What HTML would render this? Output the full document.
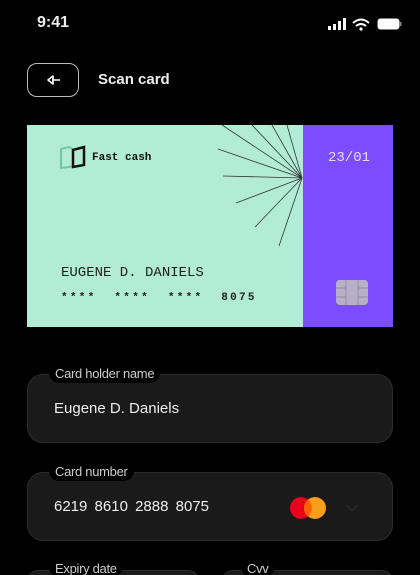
<!DOCTYPE html>
<html style="height:575px;overflow:hidden"><head><style>
body{margin:0;width:420px;height:575px;background:#000;overflow:hidden;font-family:"Liberation Sans",sans-serif;color:#fff;position:relative}
.abs{position:absolute}
.field{position:absolute;left:27px;width:364px;height:67px;background:#1a1a1a;border:1px solid #2c2c2c;border-radius:16px}
.lbl{position:absolute;background:#000;color:#ccc;font-size:13px;padding:0 6px 2px;border-radius:0 0 10px 10px;letter-spacing:-0.3px}
.val{position:absolute;left:26px;font-size:15px;color:#eee}
.mono{font-family:"Liberation Mono",monospace}
</style></head><body>
<div class="abs" style="left:37px;top:14px;font-size:16px;font-weight:bold;color:#eee">9:41</div>
<svg class="abs" style="left:327px;top:17px" width="76" height="16">
<rect x="1" y="9" width="3" height="4" fill="#fff"/><rect x="6" y="7" width="3" height="6" fill="#fff"/><rect x="11" y="4" width="3" height="9" fill="#fff"/><rect x="16" y="1" width="3" height="12" fill="#fff"/>
<path d="M26 6 Q34 -1 42 6" stroke="#fff" stroke-width="2" fill="none"/><path d="M29 9 Q34 5 39 9" stroke="#fff" stroke-width="2" fill="none"/><circle cx="34" cy="12" r="1.6" fill="#fff"/>
<rect x="51" y="2" width="21" height="10" rx="2.5" fill="#fff" stroke="#fff"/><rect x="73" y="5" width="1.5" height="4" fill="#888"/>
</svg>
<div class="abs" style="left:27px;top:63px;width:52px;height:34px;border:1px solid #bbb;border-radius:10px;box-sizing:border-box"></div>
<svg class="abs" style="left:44px;top:72px" width="18" height="16"><path d="M16 8H8M9 4L4 8L9 12Z" stroke="#fff" stroke-width="1.6" fill="none" stroke-linejoin="round"/></svg>
<div class="abs" style="left:98px;top:71px;font-size:15px;font-weight:bold;color:#eee">Scan card</div>

<div class="abs" style="left:27px;top:125px;width:276px;height:202px;background:#b2ecd5"></div>
<div class="abs" style="left:303px;top:125px;width:90px;height:202px;background:#7b4dff"></div>
<svg class="abs" style="left:0;top:0" width="420" height="575">
<g stroke="#333" stroke-width="0.8">
<line x1="302" y1="178" x2="222" y2="125"/><line x1="302" y1="178" x2="252" y2="125"/><line x1="302" y1="178" x2="272" y2="125"/><line x1="302" y1="178" x2="287" y2="125"/>
<line x1="302" y1="178" x2="218" y2="149"/><line x1="302" y1="178" x2="223" y2="176"/><line x1="302" y1="178" x2="236" y2="203"/><line x1="302" y1="178" x2="255" y2="227"/><line x1="302" y1="178" x2="279" y2="246"/>
</g>
<path d="M61 149L69 147L73 149V166L69 167L61 168Z" fill="none" stroke="#6fc8a2" stroke-width="2"/>
<path d="M73 150L84 147V165L73 167Z" fill="none" stroke="#111" stroke-width="2.5"/>
<rect x="336" y="280" width="32" height="25" rx="4" fill="#b8b0c8"/>
<path d="M336 288H346M336 297H346M358 288H368M358 297H368M346 280V305M358 280V305" stroke="#958ca8" stroke-width="1" fill="none"/>
</svg>
<div class="abs mono" style="left:92px;top:152px;font-size:11px;font-weight:bold;color:#111">Fast cash</div>
<div class="abs mono" style="left:328px;top:150px;font-size:14px;color:#e6dcff">23/01</div>
<div class="abs mono" style="left:61px;top:265px;font-size:14px;color:#222">EUGENE D. DANIELS</div>
<div class="abs mono" style="left:61px;top:292px;font-size:11px;font-weight:bold;color:#222;letter-spacing:2.3px;white-space:pre">****  ****  ****  8075</div>

<div class="field" style="top:374px"><div class="val" style="top:25px">Eugene D. Daniels</div></div>
<div class="lbl" style="left:49px;top:366px">Card holder name</div>
<div class="field" style="top:472px"><div class="val" style="top:25px;word-spacing:3px">6219 8610 2888 8075</div>
<svg class="abs" style="left:262px;top:24px" width="40" height="24"><circle cx="11" cy="11" r="11" fill="#eb001b"/><circle cx="25" cy="11" r="11" fill="#f79e1b"/><path d="M18 2.6A11 11 0 0 1 18 19.4A11 11 0 0 1 18 2.6Z" fill="#ff5f00"/></svg>
<svg class="abs" style="left:316px;top:30px" width="16" height="10"><path d="M2 2L8 8L14 2" stroke="#2a2a2a" stroke-width="1.5" fill="none"/></svg>
</div>
<div class="lbl" style="left:49px;top:464px">Card number</div>
<div class="field" style="top:570px;width:170px;height:20px"></div>
<div class="field" style="top:570px;left:222px;width:169px;height:20px"></div>
<div class="lbl" style="left:49px;top:562px;line-height:13px">Expiry date</div>
<div class="lbl" style="left:241px;top:562px;line-height:13px">Cvv</div>
</body></html>
